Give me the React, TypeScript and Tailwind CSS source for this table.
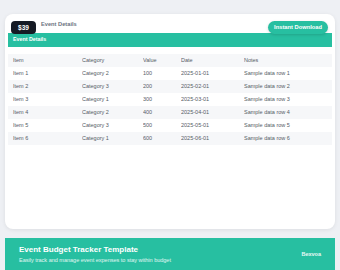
const rows = [
  { item: "Item 1", category: "Category 2", value: 100, date: "2025-01-01", notes: "Sample data row 1" },
  { item: "Item 2", category: "Category 3", value: 200, date: "2025-02-01", notes: "Sample data row 2" },
  { item: "Item 3", category: "Category 1", value: 300, date: "2025-03-01", notes: "Sample data row 3" },
  { item: "Item 4", category: "Category 2", value: 400, date: "2025-04-01", notes: "Sample data row 4" },
  { item: "Item 5", category: "Category 3", value: 500, date: "2025-05-01", notes: "Sample data row 5" },
  { item: "Item 6", category: "Category 1", value: 600, date: "2025-06-01", notes: "Sample data row 6" },
];

function Row({ cells, shaded }: { cells: (string | number)[]; shaded: boolean }) {
  return (
    <div className={`grid grid-cols-[69px_61px_38px_63px_1fr] h-[13px] items-center pl-[5px] ${shaded ? "bg-[#f6f7f9]" : "bg-white"}`}>
      {cells.map((c, i) => (
        <span key={i} className="truncate">{c}</span>
      ))}
    </div>
  );
}

export default function App() {
  return (
    <div className="w-[340px] h-[270px] bg-[#eef0f4] overflow-hidden flex flex-col font-['Liberation_Sans',Arial,sans-serif]">
      <div className="mx-[5px] mt-[14px] h-[215px] bg-white rounded-lg shadow-[0_1px_4px_rgba(0,0,0,0.08)] px-[3px] pt-[7px]">
        <div className="flex items-start justify-between h-[12px] relative z-10">
          <div className="flex items-start gap-[5px] pl-[3px]">
            <span className="h-[13px] w-[25px] rounded-[4px] bg-[#151a24] text-white font-bold text-[6.5px] flex items-center justify-center">
              $39
            </span>
            <span className="text-[5.7px] font-semibold text-[#6b7280] leading-none pt-[1px]">Event Details</span>
          </div>
          <span className="mr-[4px] h-[13px] px-[6px] rounded-full bg-[#27bfa1] text-white font-bold text-[5.75px] flex items-center shadow-[0_1px_3px_rgba(0,0,0,0.15)]">
            Instant Download
          </span>
        </div>
        <div className="h-[14px] bg-[#27bfa1] flex items-center pl-[5px] text-white font-bold text-[5.3px]">
          Event Details
        </div>
        <div className="mt-[7px] text-[5.5px] text-[#555c66]">
          <Row cells={["Item", "Category", "Value", "Date", "Notes"]} shaded />
          {rows.map((r, i) => (
            <Row key={r.item} cells={[r.item, r.category, r.value, r.date, r.notes]} shaded={i % 2 === 1} />
          ))}
        </div>
      </div>
      <div className="mx-[5px] mt-[9px] flex-1 bg-[#27bfa1] flex items-start justify-between px-[14px] pt-[7px]">
        <div className="flex flex-col">
          <span className="text-white font-bold text-[8px] leading-[10px]">Event Budget Tracker Template</span>
          <span className="text-white/85 text-[5.5px] mt-[1px]">Easily track and manage event expenses to stay within budget</span>
        </div>
        <span className="text-white/90 font-semibold text-[5.5px] mt-[5px]">Bexvoa</span>
      </div>
    </div>
  );
}
